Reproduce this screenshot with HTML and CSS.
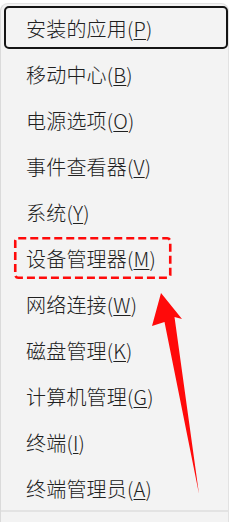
FILE: index.html
```html
<!DOCTYPE html>
<html lang="zh-CN">
<head>
<meta charset="utf-8">
<title>菜单</title>
<link rel="stylesheet" href="styles.css">
</head>
<body>
<div class="menu">
  <ul class="items">
    <li class="item focused">安装的应用(<u>P</u>)</li>
    <li class="item">移动中心(<u>B</u>)</li>
    <li class="item">电源选项(<u>O</u>)</li>
    <li class="item">事件查看器(<u>V</u>)</li>
    <li class="item">系统(<u>Y</u>)</li>
    <li class="item">设备管理器(<u>M</u>)</li>
    <li class="item">网络连接(<u>W</u>)</li>
    <li class="item">磁盘管理(<u>K</u>)</li>
    <li class="item">计算机管理(<u>G</u>)</li>
    <li class="item">终端(<u>I</u>)</li>
    <li class="item">终端管理员(<u>A</u>)</li>
  </ul>
  <div class="separator"></div>
</div>
<svg class="annotation" width="236" height="522" viewBox="0 0 236 522" aria-hidden="true">
  <rect x="15.25" y="238.25" width="155" height="39.5" rx="3" fill="none" stroke="#ff0a0a" stroke-width="2.6" stroke-dasharray="8 4"/>
  <polygon points="161,293 182,319 174.5,317 199,494 164.5,322 152,326" fill="#ff0a0a"/>
</svg>
</body>
</html>
```
FILE: styles.css
```css
html, body {
  margin: 0;
  padding: 0;
  background: #ffffff;
}
body {
  width: 236px;
  height: 522px;
  overflow: hidden;
  position: relative;
  font-family: "Noto Sans CJK SC", "Noto Sans", sans-serif;
}
.menu {
  margin-top: 3px;
  width: 229px;
  height: 540px;
  background: #f3f3f3;
  border: 1px solid #e2e2e2;
  border-left: 1px solid #dadada;
  border-top-right-radius: 8px;
  border-top-left-radius: 8px;
  box-sizing: border-box;
  padding-top: 2px;
}
.items {
  list-style: none;
  margin: 0;
  padding: 0 0 0 3px;
}
.item {
  height: 43px;
  margin-bottom: 3px;
  width: 224px;
  box-sizing: border-box;
  border: 2px solid transparent;
  border-radius: 5px;
  padding-left: 20px;
  padding-top: 2px;
  display: flex;
  align-items: center;
  font-size: 20px;
  font-weight: 300;
  color: #202020;
  white-space: nowrap;
  letter-spacing: 0.2px;
}
.item u {
  text-decoration-thickness: 1px;
  text-underline-offset: 2px;
}
.item.focused {
  border-color: #151515;
}
.separator {
  margin-top: -2px;
  height: 2px;
  background: #e3e3e3;
}
.annotation {
  position: absolute;
  left: 0;
  top: 0;
}
```
